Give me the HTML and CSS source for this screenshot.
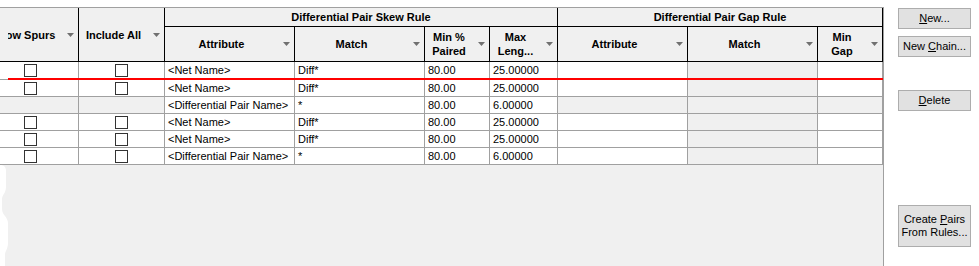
FILE: index.html
```html
<!DOCTYPE html>
<html>
<head>
<meta charset="utf-8">
<link rel="stylesheet" href="styles.css">
</head>
<body>
<div class="window">
  <div class="panel">
    <div class="cols head">
      <div class="hc tall"><span class="lbl clipped">Allow Spurs</span><svg class="tri" viewBox="0 0 7 4"><polygon points="0,0 7,0 3.5,4"/></svg></div>
      <div class="hc tall"><span class="lbl">Include All</span><svg class="tri" viewBox="0 0 7 4"><polygon points="0,0 7,0 3.5,4"/></svg></div>
      <div class="grp skew">Differential Pair Skew Rule</div>
      <div class="grp gap">Differential Pair Gap Rule</div>
      <div class="hc"><span class="lbl">Attribute</span><svg class="tri" viewBox="0 0 7 4"><polygon points="0,0 7,0 3.5,4"/></svg></div>
      <div class="hc"><span class="lbl">Match</span><svg class="tri" viewBox="0 0 7 4"><polygon points="0,0 7,0 3.5,4"/></svg></div>
      <div class="hc"><span class="lbl">Min %<br>Paired</span><svg class="tri" viewBox="0 0 7 4"><polygon points="0,0 7,0 3.5,4"/></svg></div>
      <div class="hc"><span class="lbl">Max<br>Leng...</span><svg class="tri" viewBox="0 0 7 4"><polygon points="0,0 7,0 3.5,4"/></svg></div>
      <div class="hc"><span class="lbl">Attribute</span><svg class="tri" viewBox="0 0 7 4"><polygon points="0,0 7,0 3.5,4"/></svg></div>
      <div class="hc"><span class="lbl">Match</span><svg class="tri" viewBox="0 0 7 4"><polygon points="0,0 7,0 3.5,4"/></svg></div>
      <div class="hc"><span class="lbl">Min<br>Gap</span><svg class="tri" viewBox="0 0 7 4"><polygon points="0,0 7,0 3.5,4"/></svg></div>
    </div>
    <div class="cols body">
      <div class="c cbc"><span class="cb"></span></div>
      <div class="c cbc"><span class="cb"></span></div>
      <div class="c">&lt;Net Name&gt;</div>
      <div class="c">Diff*</div>
      <div class="c">80.00</div>
      <div class="c">25.00000</div>
      <div class="c"></div>
      <div class="c dis"></div>
      <div class="c"></div>

      <div class="c cbc"><span class="cb"></span></div>
      <div class="c cbc"><span class="cb"></span></div>
      <div class="c">&lt;Net Name&gt;</div>
      <div class="c">Diff*</div>
      <div class="c">80.00</div>
      <div class="c">25.00000</div>
      <div class="c"></div>
      <div class="c dis"></div>
      <div class="c"></div>

      <div class="c dis"></div>
      <div class="c dis"></div>
      <div class="c">&lt;Differential Pair Name&gt;</div>
      <div class="c">*</div>
      <div class="c">80.00</div>
      <div class="c">6.00000</div>
      <div class="c dis"></div>
      <div class="c dis"></div>
      <div class="c dis"></div>

      <div class="c cbc"><span class="cb"></span></div>
      <div class="c cbc"><span class="cb"></span></div>
      <div class="c">&lt;Net Name&gt;</div>
      <div class="c">Diff*</div>
      <div class="c">80.00</div>
      <div class="c">25.00000</div>
      <div class="c"></div>
      <div class="c dis"></div>
      <div class="c"></div>

      <div class="c cbc"><span class="cb"></span></div>
      <div class="c cbc"><span class="cb"></span></div>
      <div class="c">&lt;Net Name&gt;</div>
      <div class="c">Diff*</div>
      <div class="c">80.00</div>
      <div class="c">25.00000</div>
      <div class="c"></div>
      <div class="c dis"></div>
      <div class="c"></div>

      <div class="c cbc"><span class="cb"></span></div>
      <div class="c cbc"><span class="cb"></span></div>
      <div class="c">&lt;Differential Pair Name&gt;</div>
      <div class="c">*</div>
      <div class="c">80.00</div>
      <div class="c">6.00000</div>
      <div class="c"></div>
      <div class="c dis"></div>
      <div class="c"></div>
    </div>
    <div class="marker"></div>
    <svg class="blob" width="10" height="101" viewBox="0 0 10 101"><path d="M0,0 C4,0 6,2 6,6 L6,22 C6,28 2,30 2,34 L2,44 C2,50 8,52 8,58 L8,78 C8,84 5,86 5,90 L5,101 L0,101 Z"/></svg>
  </div>
  <div class="side">
    <div class="btn b1"><span><u>N</u>ew...</span></div>
    <div class="btn b2"><span>New <u>C</u>hain...</span></div>
    <div class="btn b3"><span><u>D</u>elete</span></div>
    <div class="btn b4"><span>Create <u>P</u>airs<br>From Rules...</span></div>
  </div>
</div>
</body>
</html>
```

FILE: styles.css
```css
* { box-sizing: border-box; }
body {
  margin: 0;
  background: #fff;
  font-family: "Liberation Sans", Arial, sans-serif;
  font-size: 11px;
  color: #000;
}
.window {
  display: flex;
  align-items: flex-start;
  height: 266px;
  overflow: hidden;
}
.panel {
  position: relative;
  flex: none;
  width: 884px;
  height: 259px;
  margin-top: 7px;
  border-top: 1px solid #a0a0a0;
  border-right: 1px solid #a0a0a0;
  background: #f0f0f0;
  overflow: hidden;
}
.cols {
  margin-left: -18px;
  width: 901px;
  display: grid;
  grid-template-columns: 95px 85px 129px 129px 64px 67px 129px 129px 64px;
  column-gap: 1px;
}
.head {
  grid-template-rows: 18px 34px;
  row-gap: 1px;
  background: #000;
  border: 1px solid #000;
  border-top: none;
}
.hc {
  display: flex;
  align-items: center;
  padding-right: 4px;
  background: #f0f0f0;
  font-weight: bold;
}
.hc.tall { grid-row: 1 / span 2; }
.lbl {
  flex: 1;
  padding-right: 5px;
  text-align: center;
  line-height: 14px;
  white-space: nowrap;
}
.lbl.clipped {
  padding-right: 3px;
  clip-path: inset(0 0 0 25px);
}
.tri {
  flex: none;
  width: 7px;
  height: 4px;
  fill: #707070;
}
.grp {
  background: #f0f0f0;
  font-weight: bold;
  text-align: center;
  line-height: 18px;
  white-space: nowrap;
}
.grp.skew { grid-column: 3 / span 4; }
.grp.gap { grid-column: 7 / span 3; }
.body {
  grid-template-rows: 17px 16px 16px 16px 16px 16px;
  row-gap: 1px;
  background: #a0a0a0;
  border: 1px solid #a0a0a0;
  border-top: none;
}
.c {
  background: #fff;
  padding-left: 3px;
  line-height: 16px;
  white-space: nowrap;
  overflow: hidden;
}
.c.dis { background: #f0f0f0; }
.c.cbc {
  display: flex;
  align-items: center;
  justify-content: center;
  padding-left: 0;
}
.cb {
  width: 13px;
  height: 13px;
  border: 1px solid #333;
  background: #fff;
}
.marker {
  position: absolute;
  left: 8px;
  top: 70px;
  width: 875px;
  height: 2px;
  background: #f00;
}
.blob {
  position: absolute;
  left: 0;
  top: 157px;
  fill: #fff;
}
.side {
  flex: 1;
  display: flex;
  flex-direction: column;
  padding: 8px 0 0 14px;
}
.btn {
  width: 73px;
  height: 21px;
  border: 1px solid #adadad;
  background: #e1e1e1;
  display: flex;
  align-items: center;
  justify-content: center;
  text-align: center;
  line-height: 13px;
  white-space: nowrap;
}
.b2 { margin-top: 7px; }
.b3 { margin-top: 33px; }
.b4 { margin-top: 94px; height: 42px; }
```
